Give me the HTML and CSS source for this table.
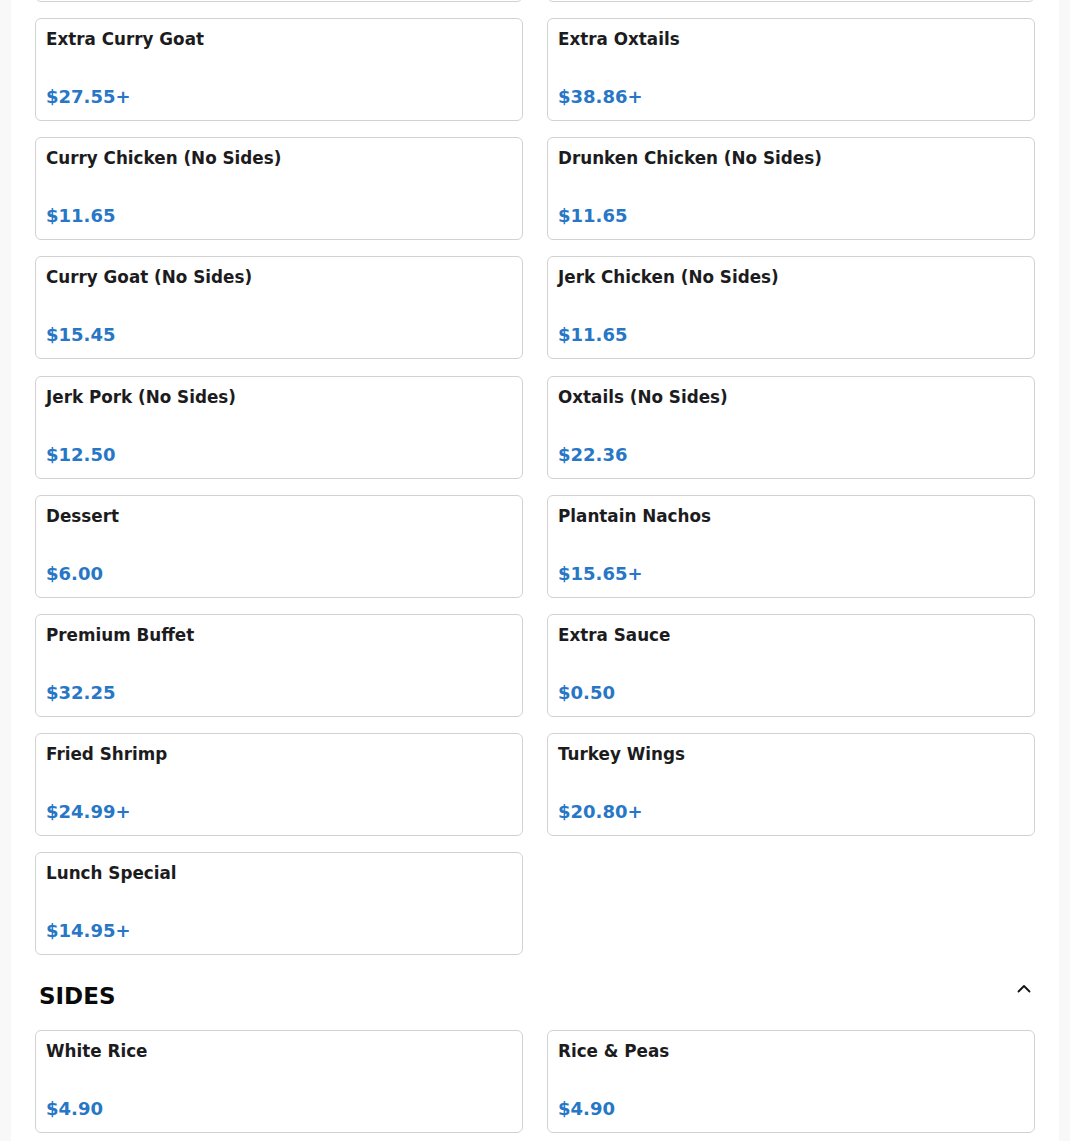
FILE: index.html
```html
<!DOCTYPE html>
<html lang="en">
<head>
<meta charset="utf-8">
<title>Menu</title>
<link rel="stylesheet" href="styles.css">
</head>
<body>
<main class="page">
  <section class="section">
    <div class="grid grid-scrolled">
      <div class="card card-ghost" aria-hidden="true"></div>
      <div class="card card-ghost" aria-hidden="true"></div>
      <div class="card"><h3 class="item-name">Extra Curry Goat</h3><p class="item-price">$27.55+</p></div>
      <div class="card"><h3 class="item-name">Extra Oxtails</h3><p class="item-price">$38.86+</p></div>
      <div class="card"><h3 class="item-name">Curry Chicken (No Sides)</h3><p class="item-price">$11.65</p></div>
      <div class="card"><h3 class="item-name">Drunken Chicken (No Sides)</h3><p class="item-price">$11.65</p></div>
      <div class="card"><h3 class="item-name">Curry Goat (No Sides)</h3><p class="item-price">$15.45</p></div>
      <div class="card"><h3 class="item-name">Jerk Chicken (No Sides)</h3><p class="item-price">$11.65</p></div>
      <div class="card"><h3 class="item-name">Jerk Pork (No Sides)</h3><p class="item-price">$12.50</p></div>
      <div class="card"><h3 class="item-name">Oxtails (No Sides)</h3><p class="item-price">$22.36</p></div>
      <div class="card"><h3 class="item-name">Dessert</h3><p class="item-price">$6.00</p></div>
      <div class="card"><h3 class="item-name">Plantain Nachos</h3><p class="item-price">$15.65+</p></div>
      <div class="card"><h3 class="item-name">Premium Buffet</h3><p class="item-price">$32.25</p></div>
      <div class="card"><h3 class="item-name">Extra Sauce</h3><p class="item-price">$0.50</p></div>
      <div class="card"><h3 class="item-name">Fried Shrimp</h3><p class="item-price">$24.99+</p></div>
      <div class="card"><h3 class="item-name">Turkey Wings</h3><p class="item-price">$20.80+</p></div>
      <div class="card"><h3 class="item-name">Lunch Special</h3><p class="item-price">$14.95+</p></div>
    </div>
  </section>
  <section class="section">
    <div class="section-header">
      <h2 class="section-title">SIDES</h2>
      <svg class="chevron" width="16" height="16" viewBox="0 0 16 16" aria-hidden="true">
        <polyline points="2.5,10.5 8,5 13.5,10.5" fill="none" stroke="#111" stroke-width="1.8" stroke-linecap="round" stroke-linejoin="round"/>
      </svg>
    </div>
    <div class="grid">
      <div class="card"><h3 class="item-name">White Rice</h3><p class="item-price">$4.90</p></div>
      <div class="card"><h3 class="item-name">Rice &amp; Peas</h3><p class="item-price">$4.90</p></div>
    </div>
  </section>
</main>
</body>
</html>
```

FILE: styles.css
```css
html, body {
  margin: 0;
  padding: 0;
  background: #f8f8f8;
  font-family: "DejaVu Sans", "Liberation Sans", sans-serif;
}

.page {
  margin: 0 11px;
  background: #ffffff;
  padding: 0 24px 40px;
  overflow: hidden;
}

.grid {
  display: grid;
  grid-template-columns: 1fr 1fr;
  column-gap: 24px;
  row-gap: 16.15px;
}

.grid-scrolled {
  margin-top: -101px;
}

.card {
  box-sizing: border-box;
  height: 103px;
  border: 1px solid #d2d2d2;
  border-radius: 6px;
  padding: 10px 10px 13px;
  display: flex;
  flex-direction: column;
  justify-content: space-between;
  background: #fff;
}

.item-name {
  margin: 0;
  font-size: 16.8px;
  font-weight: 700;
  color: #1c1c1e;
  line-height: normal;
}

.item-price {
  margin: 0;
  font-size: 18px;
  font-weight: 700;
  color: #2777c6;
  line-height: normal;
}

.section-header {
  display: flex;
  justify-content: space-between;
  align-items: flex-start;
  padding: 0 3px 0 4px;
  margin: 27.5px 0 21.7px;
}

.section-title {
  margin: 0;
  font-size: 23px;
  font-weight: 700;
  color: #0a0a0a;
  line-height: normal;
}

.chevron {
  display: block;
  margin-top: -2px;
}
```
